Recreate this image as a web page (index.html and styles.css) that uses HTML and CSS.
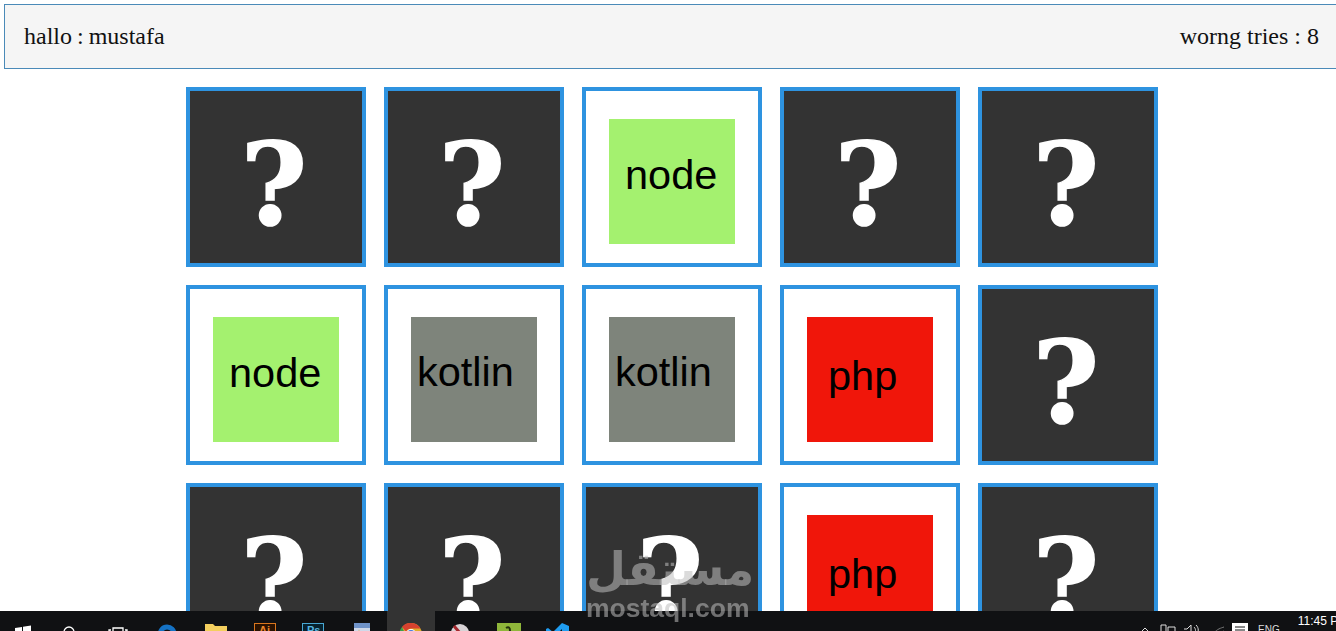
FILE: index.html
```html
<!DOCTYPE html>
<html lang="en">
<head>
    <meta charset="UTF-8">
    <title>Memory Game</title>
    <link rel="stylesheet" href="styles.css">
</head>
<body>

    <!-- Top info bar -->
    <div class="info-bar">
        <span class="player">hallo : mustafa</span>
        <span>worng tries : 8</span>
    </div>

    <!-- Game board -->
    <div class="board">
        <div class="card"><span class="mark">?</span></div>
        <div class="card"><span class="mark">?</span></div>
        <div class="card open"><div class="face node">node</div></div>
        <div class="card"><span class="mark">?</span></div>
        <div class="card"><span class="mark">?</span></div>

        <div class="card open"><div class="face node">node</div></div>
        <div class="card open"><div class="face kotlin">kotlin</div></div>
        <div class="card open"><div class="face kotlin">kotlin</div></div>
        <div class="card open"><div class="face php">php</div></div>
        <div class="card"><span class="mark">?</span></div>

        <div class="card"><span class="mark">?</span></div>
        <div class="card"><span class="mark">?</span></div>
        <div class="card"><span class="mark">?</span></div>
        <div class="card open"><div class="face php">php</div></div>
        <div class="card"><span class="mark">?</span></div>
    </div>

    <!-- Watermark -->
    <div class="watermark">
        <div class="wm-arabic">مستقل</div>
        <div class="wm-latin">mostaql.com</div>
    </div>

    <!-- Windows taskbar -->
    <div class="taskbar">
        <div class="task-icons">
            <div class="task first">
                <svg width="16" height="14" viewBox="0 0 16 14"><path fill="#fff" d="M0 5l7-1v4H0zM8 3.800l8-1.300V8H8z"/></svg>
            </div>
            <div class="task">
                <svg width="14" height="14" viewBox="0 0 14 14"><circle cx="7" cy="9" r="5" fill="none" stroke="#fff" stroke-width="1.300"/></svg>
            </div>
            <div class="task">
                <svg width="20" height="14" viewBox="0 0 20 14"><path fill="none" stroke="#fff" stroke-width="1.300" d="M5 5h10v11H5zM3 7H1v8h2M17 7h2v8h-2"/></svg>
            </div>
            <div class="task">
                <svg width="22" height="22" viewBox="0 0 22 22"><path fill="none" stroke="#1572c4" stroke-width="5" d="M4 13c0-6 3-9 7-9s7 3 7 7H5"/></svg>
            </div>
            <div class="task">
                <svg width="22" height="18" viewBox="0 0 22 18"><path fill="#f4cf5e" d="M0 1h8l2 2h12v15H0z"/></svg>
            </div>
            <div class="task">
                <svg width="22" height="22" viewBox="0 0 22 22"><rect x=".5" y=".5" width="21" height="21" fill="#2a1200" stroke="#d9761e"/><text x="5" y="11" class="app-letters ai">Ai</text></svg>
            </div>
            <div class="task">
                <svg width="22" height="22" viewBox="0 0 22 22"><rect x=".5" y=".5" width="21" height="21" fill="#06222f" stroke="#48a7d3"/><text x="5" y="11" class="app-letters ps">Ps</text></svg>
            </div>
            <div class="task">
                <svg width="16" height="22" viewBox="0 0 16 22"><rect width="16" height="22" fill="#cfd9ea"/><rect width="16" height="5" fill="#6f93c9"/><path fill="#e8a33a" d="M2 20l3-14 3 14z"/></svg>
            </div>
            <div class="task active">
                <svg width="22" height="22" viewBox="0 0 22 22"><circle cx="11" cy="11" r="11" fill="#e0ad2a"/><path fill="#d7412f" d="M11 0a11 11 0 0 1 9.500 5.500H11a5.500 5.500 0 0 0-5 3L2 4a11 11 0 0 1 9-4z"/><path fill="#3e9c4b" d="M2 4l4.500 9.500L10 22A11 11 0 0 1 2 4z"/><circle cx="11" cy="11" r="5" fill="#fff"/><circle cx="11" cy="11" r="4" fill="#3f78dd"/></svg>
            </div>
            <div class="task">
                <svg width="20" height="20" viewBox="0 0 20 20"><circle cx="10" cy="10" r="9" fill="#d8d3d6"/><path stroke="#a4262c" stroke-width="3" d="M4 3l12 14"/></svg>
            </div>
            <div class="task">
                <svg width="24" height="22" viewBox="0 0 24 22"><rect width="24" height="22" fill="#8fb63a"/><path fill="none" stroke="#23310c" stroke-width="2" d="M9 5c3-2 4 0 4 3l1 8"/></svg>
            </div>
            <div class="task">
                <svg width="23" height="22" viewBox="0 0 23 22"><path fill="#1f9cf0" d="M16 0l7 3v16l-7 3-9-9-5 4-2-1V6l2-1 5 4zm0 6l-5 5 5 5z"/></svg>
            </div>
        </div>

        <div class="tray">
            <svg class="tray-caret" width="10" height="6" viewBox="0 0 10 6"><path fill="none" stroke="#ddd" d="M1 5l4-4 4 4"/></svg>
            <svg class="tray-net" width="16" height="12" viewBox="0 0 16 12"><path fill="none" stroke="#ddd" d="M1 3h5v9H1zM8 5h7v7H8z"/></svg>
            <svg class="tray-vol" width="16" height="12" viewBox="0 0 16 12"><path fill="none" stroke="#ddd" d="M1 5h3l4-4v11M11 3c2 2 2 5 0 7M13 1c3 3 3 7 0 10"/></svg>
            <svg class="tray-wifi" width="12" height="12" viewBox="0 0 12 12"><path fill="none" stroke="#777" d="M1 8c3-4 7-5 10-6M4 10c2-2 4-3 7-4"/></svg>
            <svg class="tray-note" width="16" height="13" viewBox="0 0 16 13"><path fill="#fff" d="M0 0h16v13H0z"/><path stroke="#111" d="M3 4h10M3 7h10"/></svg>
            <span class="tray-lang">ENG</span>
            <span class="tray-time">11:45 PM</span>
        </div>
    </div>

</body>
</html>
```

FILE: styles.css
```css
html, body {
    height: 100%;
    overflow: hidden;
}

body {
    margin: 0;
    background-color: #fff;
    padding: 4px 0 0 4px;
    box-sizing: border-box;
}

/* Top info bar */
.info-bar {
    display: flex;
    justify-content: space-between;
    align-items: center;
    height: 65px;
    box-sizing: border-box;
    padding: 0 17px 0 19px;
    background-color: #f5f5f5;
    border: 1px solid #4a8ab8;
    border-right: none;
    font-family: "Liberation Serif", serif;
    font-size: 24px;
    color: #111;
}

.player {
    word-spacing: -1px;
}

/* Game board */
.board {
    display: grid;
    grid-template-columns: repeat(5, 180px);
    grid-auto-rows: 180px;
    gap: 18px;
    justify-content: center;
    margin: 18px 0 0 4px;
}

.card {
    box-sizing: border-box;
    border: 4px solid #2e93e0;
    background-color: #333;
    display: flex;
    align-items: center;
    justify-content: center;
}

.card.open {
    background-color: #fff;
    padding: 28px 23px 0;
    align-items: flex-start;
}

.mark {
    font-family: "DejaVu Serif", serif;
    font-weight: bold;
    font-size: 114px;
    line-height: 1;
    color: #fff;
    margin: 14px 4px 0 0;
    -webkit-text-stroke: 1.5px #fff;
}

.face {
    width: 126px;
    height: 125px;
    font-family: "Liberation Sans", sans-serif;
    font-size: 41.5px;
    line-height: 112px;
    color: #000;
}

.face.node {
    background-color: #a4f16f;
    padding-left: 16px;
    width: 110px;
}

.face.kotlin {
    background-color: #7e847b;
    padding-left: 6px;
    width: 120px;
    line-height: 110px;
}

.face.php {
    background-color: #f0160a;
    padding-left: 21px;
    width: 105px;
    line-height: 118px;
}

/* Watermark */
.watermark {
    position: fixed;
    left: 586px;
    top: 540px;
    width: 162px;
    text-align: center;
    color: rgba(190, 190, 190, 0.55);
    z-index: 2;
}

.wm-arabic {
    font-family: "DejaVu Sans", sans-serif;
    font-weight: bold;
    font-size: 46px;
    line-height: 58px;
}

.wm-latin {
    font-family: "Liberation Sans", sans-serif;
    font-weight: bold;
    font-size: 26.5px;
    line-height: 20px;
}

/* Windows taskbar */
.taskbar {
    position: fixed;
    left: 0;
    right: 0;
    bottom: 0;
    height: 20px;
    background-color: #101113;
    display: flex;
    justify-content: space-between;
    overflow: hidden;
}

.task-icons {
    display: flex;
}

.task {
    width: 48.8px;
    height: 20px;
    display: flex;
    justify-content: center;
    padding-top: 12px;
    box-sizing: border-box;
}

.task.first {
    width: 45px;
}

.task.active {
    background-color: #333;
}

.task svg {
    flex: none;
}

.app-letters {
    font-family: "Liberation Sans", sans-serif;
    font-size: 11px;
    font-weight: bold;
}

.app-letters.ai {
    fill: #e8842a;
}

.app-letters.ps {
    fill: #56b4e0;
}

.tray {
    display: flex;
    align-items: flex-start;
    width: 196px;
    flex: none;
    color: #ddd;
    font-family: "Liberation Sans", sans-serif;
    white-space: nowrap;
}

.tray svg {
    flex: none;
}

.tray-caret {
    margin-top: 16px;
}

.tray-net {
    margin: 11px 0 0 10px;
}

.tray-vol {
    margin: 13px 0 0 7px;
}

.tray-wifi {
    margin: 14px 0 0 14px;
}

.tray-note {
    margin: 12px 0 0 7px;
}

.tray-lang {
    margin: 13px 0 0 10px;
    font-size: 10px;
}

.tray-time {
    margin: 3px 0 0 18px;
    font-size: 12px;
    color: #fff;
}
```
